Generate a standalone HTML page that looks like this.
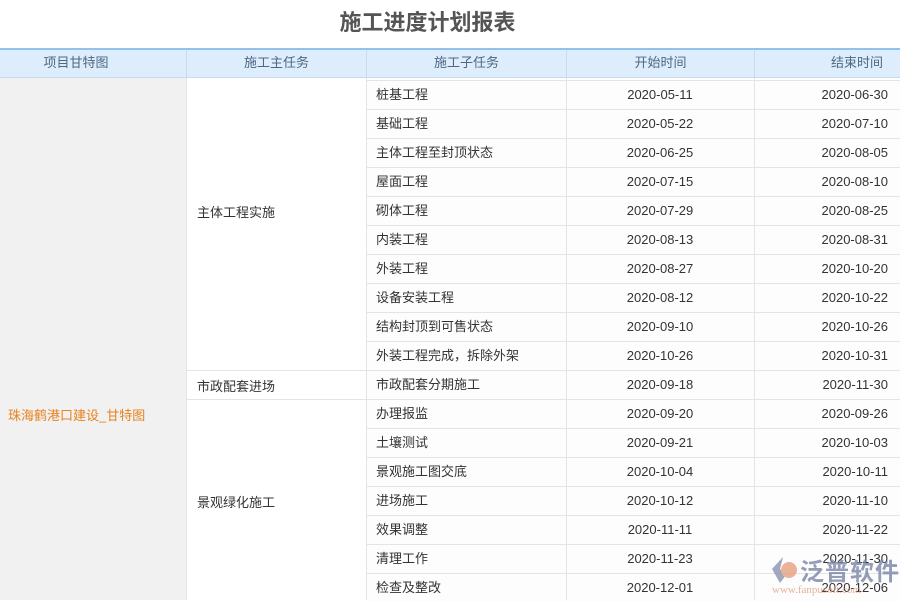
<!DOCTYPE html>
<html><head><meta charset="utf-8"><style>
*{margin:0;padding:0;box-sizing:border-box}
body{width:900px;height:600px;overflow:hidden;background:#fff;font-family:"Liberation Sans","Noto Sans CJK SC",sans-serif;font-size:13px;color:#333;position:relative}
.t{position:absolute;top:8px;left:0;width:855px;text-align:center;font-size:22px;font-weight:bold;color:#555;line-height:30px}
.hd{position:absolute;top:48px;left:0;width:900px;height:30px;background:#deedfb;border-top:2px solid #8fc3ee;border-bottom:1px solid #c5dcef}
.hd div{position:absolute;top:0;height:28px;line-height:26px;text-align:center;color:#4d6785;border-right:1px solid #c5dcef}
.c1{position:absolute;left:0;top:78px;width:186px;height:522px;background:#f1f1f1}
.c2{position:absolute;left:186px;top:78px;width:180px;height:522px;background:#fff;border-left:1px solid #e4e4e4}
.r{position:absolute;left:366px;width:534px;height:29px;border-top:1px solid #e4e4e4;background:#fdfdfd;line-height:28px}
.r span{position:absolute;top:0}
.a{left:10px}.b{left:200px;width:188px;text-align:center}.c{right:12px}
.vl{position:absolute;top:78px;height:522px;width:1px;background:#e4e4e4}
.m{position:absolute;left:186px;width:180px;border-top:1px solid #e4e4e4}
</style></head><body>
<div class="t">施工进度计划报表</div>
<div class="hd">
<div style="left:0;width:187px;padding-right:34px">项目甘特图</div>
<div style="left:187px;width:180px">施工主任务</div>
<div style="left:367px;width:200px">施工子任务</div>
<div style="left:567px;width:188px">开始时间</div>
<div style="left:755px;width:145px;border:none;text-align:right;padding-right:17px">结束时间</div>
</div>
<div class="c1"></div><div class="c2"></div>
<div class="r" style="top:80px"><span class="a">桩基工程</span><span class="b">2020-05-11</span><span class="c">2020-06-30</span></div>
<div class="r" style="top:109px"><span class="a">基础工程</span><span class="b">2020-05-22</span><span class="c">2020-07-10</span></div>
<div class="r" style="top:138px"><span class="a">主体工程至封顶状态</span><span class="b">2020-06-25</span><span class="c">2020-08-05</span></div>
<div class="r" style="top:167px"><span class="a">屋面工程</span><span class="b">2020-07-15</span><span class="c">2020-08-10</span></div>
<div class="r" style="top:196px"><span class="a">砌体工程</span><span class="b">2020-07-29</span><span class="c">2020-08-25</span></div>
<div class="r" style="top:225px"><span class="a">内装工程</span><span class="b">2020-08-13</span><span class="c">2020-08-31</span></div>
<div class="r" style="top:254px"><span class="a">外装工程</span><span class="b">2020-08-27</span><span class="c">2020-10-20</span></div>
<div class="r" style="top:283px"><span class="a">设备安装工程</span><span class="b">2020-08-12</span><span class="c">2020-10-22</span></div>
<div class="r" style="top:312px"><span class="a">结构封顶到可售状态</span><span class="b">2020-09-10</span><span class="c">2020-10-26</span></div>
<div class="r" style="top:341px"><span class="a">外装工程完成，拆除外架</span><span class="b">2020-10-26</span><span class="c">2020-10-31</span></div>
<div class="r" style="top:370px"><span class="a">市政配套分期施工</span><span class="b">2020-09-18</span><span class="c">2020-11-30</span></div>
<div class="r" style="top:399px"><span class="a">办理报监</span><span class="b">2020-09-20</span><span class="c">2020-09-26</span></div>
<div class="r" style="top:428px"><span class="a">土壤测试</span><span class="b">2020-09-21</span><span class="c">2020-10-03</span></div>
<div class="r" style="top:457px"><span class="a">景观施工图交底</span><span class="b">2020-10-04</span><span class="c">2020-10-11</span></div>
<div class="r" style="top:486px"><span class="a">进场施工</span><span class="b">2020-10-12</span><span class="c">2020-11-10</span></div>
<div class="r" style="top:515px"><span class="a">效果调整</span><span class="b">2020-11-11</span><span class="c">2020-11-22</span></div>
<div class="r" style="top:544px"><span class="a">清理工作</span><span class="b">2020-11-23</span><span class="c">2020-11-30</span></div>
<div class="r" style="top:573px"><span class="a">检查及整改</span><span class="b">2020-12-01</span><span class="c">2020-12-06</span></div>
<div class="m" style="top:370px"></div><div class="m" style="top:399px"></div>
<div class="vl" style="left:366px"></div><div class="vl" style="left:566px"></div><div class="vl" style="left:754px"></div>
<div style="position:absolute;left:197px;top:202px">主体工程实施</div>
<div style="position:absolute;left:197px;top:376px">市政配套进场</div>
<div style="position:absolute;left:197px;top:492px">景观绿化施工</div>
<div style="position:absolute;left:8px;top:405px;color:#e8821e">珠海鹤港口建设_甘特图</div>
<div style="position:absolute;left:768px;top:553px;width:132px;height:47px;opacity:.8">
<svg width="30" height="30" viewBox="0 0 30 30" style="position:absolute;left:2px;top:2px"><path d="M13 2 L2 14 L10 28 L16 20 L10 14 Z" fill="#8a93b0"/><circle cx="19" cy="15" r="8" fill="#e8a080"/></svg>
<div style="position:absolute;left:32px;top:-1px;font-size:24px;color:#7a84a6;font-weight:bold;letter-spacing:1px">泛普软件</div>
<div style="position:absolute;left:4px;top:31px;font-size:11px;color:#e0a080;font-family:'Liberation Serif',serif">www.fanpusoft.com</div>
</div>
</body></html>
